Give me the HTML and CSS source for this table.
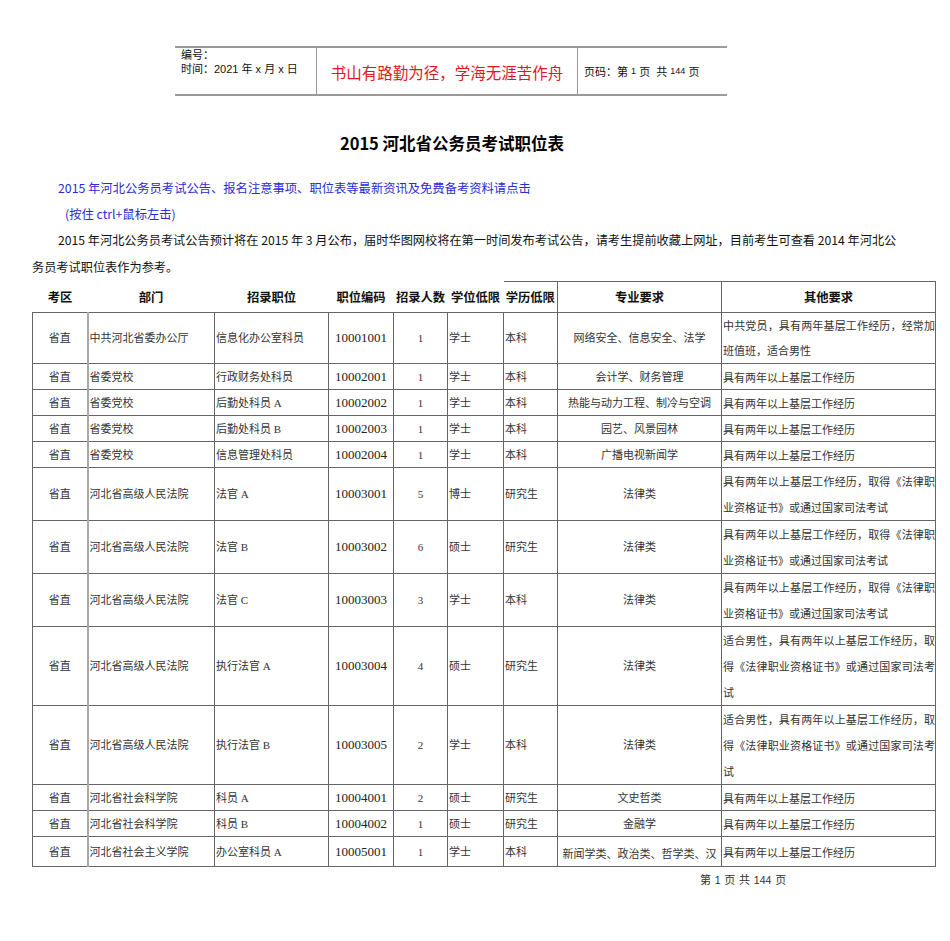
FILE: index.html
```html
<!DOCTYPE html>
<html lang="zh-CN">
<head>
<meta charset="utf-8">
<title>2015 河北省公务员考试职位表</title>
<link rel="stylesheet" href="styles.css">
</head>
<body>
<div class="page">
  <div class="doc-head">
    <div class="dh-left">编号：<br>时间：2021 年 x 月 x 日</div>
    <div class="dh-mid">书山有路勤为径，学海无涯苦作舟</div>
    <div class="dh-right">页码：第 <span class="sm">1</span> 页  共 <span class="sm">144</span> 页</div>
  </div>

  <h1 class="title">2015 河北省公务员考试职位表</h1>

  <p class="link">2015 年河北公务员考试公告、报名注意事项、职位表等最新资讯及免费备考资料请点击</p>
  <p class="link sub">(按住 ctrl+鼠标左击)</p>
  <p class="intro">2015 年河北公务员考试公告预计将在 2015 年 3 月公布，届时华图网校将在第一时间发布考试公告，请考生提前收藏上网址，目前考生可查看 2014 年河北公务员考试职位表作为参考。</p>

  <table class="jobs">
    <colgroup>
      <col class="c1"><col class="c2"><col class="c3"><col class="c4"><col class="c5">
      <col class="c6"><col class="c7"><col class="c8"><col class="c9">
    </colgroup>
    <thead>
      <tr>
        <th>考区</th><th>部门</th><th>招录职位</th><th>职位编码</th><th>招录人数</th><th>学位低限</th>
        <th class="top">学历低限</th><th class="box">专业要求</th><th class="box">其他要求</th>
      </tr>
    </thead>
    <tbody>
      <tr class="tight">
        <td class="ctr">省直</td><td class="dept">中共河北省委办公厅</td><td>信息化办公室科员</td><td class="code">10001001</td><td class="ctr">1</td><td>学士</td><td>本科</td><td class="ctr">网络安全、信息安全、法学</td><td class="other multi">中共党员，具有两年基层工作经历，经常加班值班，适合男性</td>
      </tr>
      <tr>
        <td class="ctr">省直</td><td class="dept">省委党校</td><td>行政财务处科员</td><td class="code">10002001</td><td class="ctr">1</td><td>学士</td><td>本科</td><td class="ctr">会计学、财务管理</td><td class="other">具有两年以上基层工作经历</td>
      </tr>
      <tr>
        <td class="ctr">省直</td><td class="dept">省委党校</td><td>后勤处科员 A</td><td class="code">10002002</td><td class="ctr">1</td><td>学士</td><td>本科</td><td class="ctr">热能与动力工程、制冷与空调</td><td class="other">具有两年以上基层工作经历</td>
      </tr>
      <tr>
        <td class="ctr">省直</td><td class="dept">省委党校</td><td>后勤处科员 B</td><td class="code">10002003</td><td class="ctr">1</td><td>学士</td><td>本科</td><td class="ctr">园艺、风景园林</td><td class="other">具有两年以上基层工作经历</td>
      </tr>
      <tr>
        <td class="ctr">省直</td><td class="dept">省委党校</td><td>信息管理处科员</td><td class="code">10002004</td><td class="ctr">1</td><td>学士</td><td>本科</td><td class="ctr">广播电视新闻学</td><td class="other">具有两年以上基层工作经历</td>
      </tr>
      <tr>
        <td class="ctr">省直</td><td class="dept">河北省高级人民法院</td><td>法官 A</td><td class="code">10003001</td><td class="ctr">5</td><td>博士</td><td>研究生</td><td class="ctr">法律类</td><td class="other multi">具有两年以上基层工作经历，取得《法律职业资格证书》或通过国家司法考试</td>
      </tr>
      <tr>
        <td class="ctr">省直</td><td class="dept">河北省高级人民法院</td><td>法官 B</td><td class="code">10003002</td><td class="ctr">6</td><td>硕士</td><td>研究生</td><td class="ctr">法律类</td><td class="other multi">具有两年以上基层工作经历，取得《法律职业资格证书》或通过国家司法考试</td>
      </tr>
      <tr>
        <td class="ctr">省直</td><td class="dept">河北省高级人民法院</td><td>法官 C</td><td class="code">10003003</td><td class="ctr">3</td><td>学士</td><td>本科</td><td class="ctr">法律类</td><td class="other multi">具有两年以上基层工作经历，取得《法律职业资格证书》或通过国家司法考试</td>
      </tr>
      <tr>
        <td class="ctr">省直</td><td class="dept">河北省高级人民法院</td><td>执行法官 A</td><td class="code">10003004</td><td class="ctr">4</td><td>硕士</td><td>研究生</td><td class="ctr">法律类</td><td class="other multi">适合男性，具有两年以上基层工作经历，取得《法律职业资格证书》或通过国家司法考试</td>
      </tr>
      <tr>
        <td class="ctr">省直</td><td class="dept">河北省高级人民法院</td><td>执行法官 B</td><td class="code">10003005</td><td class="ctr">2</td><td>学士</td><td>本科</td><td class="ctr">法律类</td><td class="other multi">适合男性，具有两年以上基层工作经历，取得《法律职业资格证书》或通过国家司法考试</td>
      </tr>
      <tr>
        <td class="ctr">省直</td><td class="dept">河北省社会科学院</td><td>科员 A</td><td class="code">10004001</td><td class="ctr">2</td><td>硕士</td><td>研究生</td><td class="ctr">文史哲类</td><td class="other">具有两年以上基层工作经历</td>
      </tr>
      <tr>
        <td class="ctr">省直</td><td class="dept">河北省社会科学院</td><td>科员 B</td><td class="code">10004002</td><td class="ctr">1</td><td>硕士</td><td>研究生</td><td class="ctr">金融学</td><td class="other">具有两年以上基层工作经历</td>
      </tr>
      <tr>
        <td class="ctr">省直</td><td class="dept">河北省社会主义学院</td><td>办公室科员 A</td><td class="code">10005001</td><td class="ctr">1</td><td>学士</td><td>本科</td><td class="ctr low">新闻学类、政治类、哲学类、汉</td><td class="other">具有两年以上基层工作经历</td>
      </tr>
    </tbody>
  </table>

  <div class="footer">第 <span class="fnum">1</span> 页 共 <span class="fnum">144</span> 页</div>
</div>
</body>
</html>
```

FILE: styles.css
```css
html, body {
  margin: 0;
  padding: 0;
  background: #ffffff;
}

body {
  font-family: "Noto Sans CJK SC", "Liberation Sans", sans-serif;
  color: #111111;
}

.page {
  width: 903px;
  padding: 46px 0 0 32px;
}

/* document header box */
.doc-head {
  display: flex;
  margin-left: 143px;
  width: 552px;
  height: 46px;
  border-top: 2px solid #9a9a9a;
  border-bottom: 2px solid #9a9a9a;
  font-family: "Liberation Sans", "Noto Sans CJK SC", sans-serif;
}

.dh-left {
  width: 135px;
  padding: 0 0 0 6px;
  border-right: 1px solid #9a9a9a;
  font-size: 11px;
  line-height: 14px;
  color: #111;
}

.dh-mid {
  width: 261px;
  border-right: 1px solid #9a9a9a;
  display: flex;
  align-items: center;
  justify-content: center;
  color: #e3161d;
  font-family: "Noto Sans CJK SC", sans-serif;
  font-size: 15.5px;
  padding-top: 2px;
  box-sizing: border-box;
}

.dh-right {
  flex: 1;
  padding-left: 6px;
  display: flex;
  align-items: center;
  font-size: 11px;
  color: #111;
  white-space: pre;
}

.dh-right .sm {
  font-size: 9px;
}

/* title + intro */
.title {
  margin: 35px 63px 0 0;
  font-size: 16.5px;
  line-height: 24px;
  font-weight: bold;
  text-align: center;
  color: #000;
}

.link {
  margin: 20px 0 0 0;
  padding-left: 26px;
  font-size: 12.3px;
  line-height: 26px;
  color: #2b2bd3;
}

.link.sub {
  margin-top: 0;
  padding-left: 33px;
}

.intro {
  margin: 0;
  width: 870px;
  text-indent: 26px;
  font-size: 12.2px;
  line-height: 27px;
  color: #111;
}

/* table */
.jobs {
  width: 903px;
  border-collapse: collapse;
  table-layout: fixed;
  font-family: "Liberation Serif", "Noto Sans CJK SC", serif;
  font-size: 11px;
  color: #333;
}

.c1 { width: 55px; }
.c2 { width: 127px; }
.c3 { width: 114px; }
.c4 { width: 65px; }
.c5 { width: 54px; }
.c6 { width: 56px; }
.c7 { width: 54px; }
.c8 { width: 164px; }
.c9 { width: 214px; }

.jobs th {
  height: 30px;
  padding: 0;
  font-family: "Noto Sans CJK SC", sans-serif;
  font-size: 12.3px;
  font-weight: bold;
  color: #111;
  text-align: center;
  vertical-align: middle;
  border: none;
}

.jobs th.top {
  border-top: 1px solid #666;
}

.jobs th.box {
  border-top: 1px solid #666;
  border-left: 1px solid #666;
  border-right: 1px solid #666;
}

.jobs td {
  height: 25px;
  padding: 0 0 0 1px;
  line-height: 18px;
  border: 1px solid #666;
  vertical-align: middle;
  text-align: left;
  white-space: nowrap;
  overflow: hidden;
}

.jobs td.ctr {
  text-align: center;
  padding: 0;
}

.jobs td.dept {
  border-left: 2px solid #a8a8a8;
}

.jobs td.code {
  text-align: center;
  padding: 0;
  font-size: 13px;
  color: #222;
}

.jobs td.other {
  font-family: "Noto Sans CJK SC", sans-serif;
  white-space: normal;
  text-align: justify;
  word-break: break-all;
}

.jobs td.other.multi {
  line-height: 26px;
  vertical-align: top;
}

.jobs tr.tight td.other {
  line-height: 25px;
}

.jobs td.low {
  padding-top: 4px;
}

.footer {
  margin-top: 6px;
  padding-left: 668px;
  font-family: "Liberation Serif", "Noto Sans CJK SC", serif;
  font-size: 11px;
  line-height: 14px;
  color: #333;
  word-spacing: 1px;
}

.footer .fnum {
  font-family: "Liberation Sans", sans-serif;
  font-size: 10.5px;
}
```
